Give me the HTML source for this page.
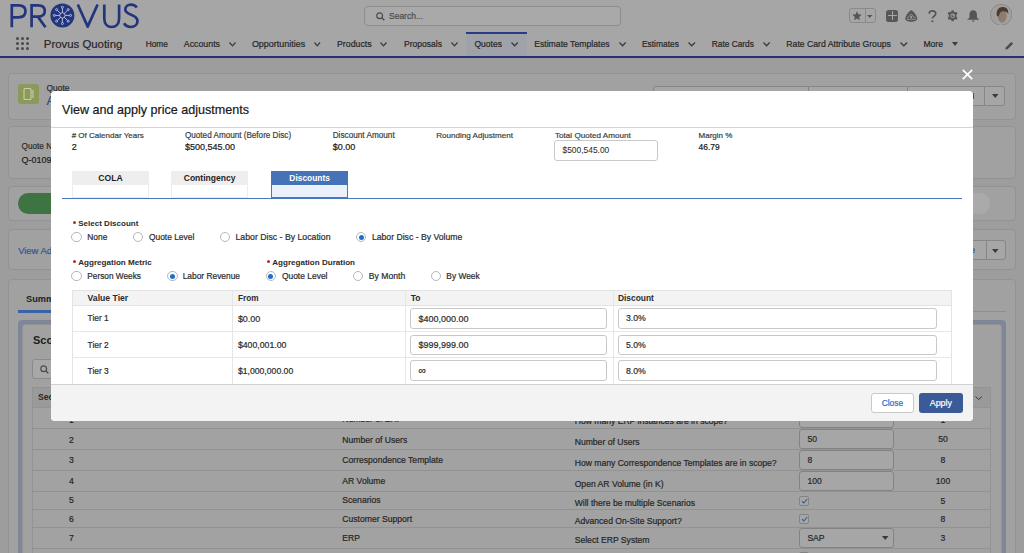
<!DOCTYPE html><html><head><meta charset="utf-8"><style>
html,body{margin:0;padding:0;} body{width:1024px;height:553px;overflow:hidden;position:relative;background:#9d9d9d;font-family:"Liberation Sans", sans-serif;}
.t{position:absolute;white-space:nowrap;-webkit-text-stroke:0.2px currentColor;} .r{position:absolute;}
</style></head><body>
<div class="r" style="left:0.00px;top:0.00px;width:1024.00px;height:56.00px;background:#a6a6a6;"></div>
<svg class="r" style="left:0;top:0" width="150" height="32" viewBox="0 0 150 32">
<g fill="none" stroke="#24357f" stroke-width="2.7" stroke-linecap="butt">
<path d="M11.8 27.3 V5.3 H18.5 C23.5 5.3 25.5 8 25.5 11.3 C25.5 14.6 23.5 17.3 18.5 17.3 H11.8"/>
<path d="M31.6 27.3 V5.3 H38 C42.8 5.3 44.8 8 44.8 11 C44.8 14 42.8 16.6 38 16.6 H31.6 M37.8 16.6 L45.5 27.3"/>
<path d="M77.8 4.5 L87.7 26.6 L97.6 4.5" stroke-linejoin="round"/>
<path d="M104.3 4.5 V18.5 C104.3 24 107.5 27 111.7 27 C115.9 27 119.1 24 119.1 18.5 V4.5"/>
<path d="M136.8 7.6 C135.5 5.6 133.5 4.7 131 4.7 C127.6 4.7 125.3 6.6 125.3 9.5 C125.3 15.8 137.5 13.6 137.5 21 C137.5 24.6 134.6 27 130.9 27 C127.9 27 125.4 25.7 124 23.3"/>
</g>
<circle cx="62.4" cy="15.4" r="12" fill="#24357f"/>
<g stroke="#c4c8dc" stroke-width="0.9" fill="none">
<circle cx="62.4" cy="15.4" r="2.7"/>
<path d="M62.4 12.7 V8.2 M62.4 18.1 V22.6 M59.7 15.4 H55.2 M65.1 15.4 H69.6 M60.5 13.5 L57.3 10.3 M64.3 13.5 L67.5 10.3 M60.5 17.3 L57.3 20.5 M64.3 17.3 L67.5 20.5"/>
<circle cx="62.4" cy="7.3" r="1"/><circle cx="62.4" cy="23.5" r="1"/><circle cx="54.3" cy="15.4" r="1"/><circle cx="70.5" cy="15.4" r="1"/>
<circle cx="56.6" cy="9.6" r="1"/><circle cx="68.2" cy="9.6" r="1"/><circle cx="56.6" cy="21.2" r="1"/><circle cx="68.2" cy="21.2" r="1"/>
</g>
</svg>
<div class="r" style="left:364.00px;top:6.00px;width:256.50px;height:19.60px;background:#a9a9a9;border:1px solid #8c8c8c;box-sizing:border-box;border-radius:4px;"></div>
<svg class="r" style="left:375.5px;top:11.5px" width="9" height="9"><circle cx="3.7" cy="3.7" r="2.9" fill="none" stroke="#4a4a4a" stroke-width="1.2"/><path d="M5.8 5.8 L8.3 8.3" stroke="#4a4a4a" stroke-width="1.3"/></svg>
<div class="t" style="left:389.00px;top:12px;font-size:8.5px;line-height:8.5px;color:#4d4d4d;">Search...</div>
<div class="r" style="left:849.30px;top:8.10px;width:26.30px;height:15.30px;background:transparent;border:1px solid #8a8a8a;box-sizing:border-box;border-radius:3px;"></div>
<div class="r" style="left:865.00px;top:8.50px;width:1.00px;height:14.50px;background:#8a8a8a;"></div>
<svg class="r" style="left:851.8px;top:10.6px" width="10" height="10" viewBox="0 0 24 24"><path d="M12 0.8 L15.2 8 L23.2 8.8 L17.2 14.1 L18.9 22 L12 17.9 L5.1 22 L6.8 14.1 L0.8 8.8 L8.8 8 Z" fill="#555555"/></svg>
<svg class="r" style="left:867.25px;top:15.100000000000001px;overflow:visible" width="5.5" height="3"><path d="M0 0 L5.5 0 L2.75 3 Z" fill="#555555"/></svg>
<div class="r" style="left:886.20px;top:9.90px;width:12.10px;height:12.00px;background:#585858;border-radius:2.5px;"></div>
<div class="r" style="left:891.70px;top:11.30px;width:1.20px;height:9.20px;background:#a6a6a6;"></div>
<div class="r" style="left:887.60px;top:15.30px;width:9.40px;height:1.20px;background:#a6a6a6;"></div>
<svg class="r" style="left:905px;top:9.8px" width="12.5" height="12.2" viewBox="0 0 25 24"><path d="M12.5 0.5 C9 0.5 0.5 12 0.5 17 C0.5 21.5 6 23.5 12.5 23.5 C19 23.5 24.5 21.5 24.5 17 C24.5 12 16 0.5 12.5 0.5 Z" fill="#575757"/><path d="M3.5 16.5 C7 14 10 11.5 12.5 8 M12.5 8 C15 11.5 18 14 21.5 16.5 M4 19 C9 18 16 18 21 19" stroke="#a6a6a6" stroke-width="1.5" fill="none"/><circle cx="12.5" cy="14" r="2.2" fill="#a6a6a6"/></svg>
<svg class="r" style="left:927.5px;top:10px" width="9" height="12.5" viewBox="0 0 9 12.5"><path d="M1.2 3.8 C1.2 1.9 2.6 0.9 4.4 0.9 C6.3 0.9 7.7 2 7.7 3.7 C7.7 5.3 6.6 5.9 5.5 6.6 C4.7 7.1 4.4 7.6 4.4 8.6" fill="none" stroke="#555555" stroke-width="1.7"/><circle cx="4.4" cy="11.2" r="1.05" fill="#555555"/></svg>
<svg class="r" style="left:946.5px;top:10.3px" width="11.2" height="11.6" viewBox="0 0 24 25"><path fill="#555555" d="M10 0.5 H14 L14.8 3.6 L17.6 5.1 L20.6 4.1 L22.6 7.5 L20.3 9.7 V15.3 L22.6 17.5 L20.6 20.9 L17.6 19.9 L14.8 21.4 L14 24.5 H10 L9.2 21.4 L6.4 19.9 L3.4 20.9 L1.4 17.5 L3.7 15.3 V9.7 L1.4 7.5 L3.4 4.1 L6.4 5.1 L9.2 3.6 Z"/><circle cx="12" cy="12.5" r="5" fill="#a6a6a6"/><path d="M12 9.5 A3 3 0 1 0 15 12.5 H12 Z" fill="#555555"/></svg>
<svg class="r" style="left:966.6px;top:10px" width="12.4" height="12" viewBox="0 0 25 24"><path fill="#555555" d="M12.5 0.5 C7.5 0.5 5 4 5 9 V14 C5 16 3 17.5 0.8 18.5 V19.5 H24.2 V18.5 C22 17.5 20 16 20 14 V9 C20 4 17.5 0.5 12.5 0.5 Z"/><path d="M9.8 21 C10.3 22.8 11.3 23.6 12.5 23.6 C13.7 23.6 14.7 22.8 15.2 21 Z" fill="#555555"/></svg>
<svg class="r" style="left:989.8px;top:3.6px" width="22.4" height="21.6" viewBox="0 0 22.4 21.6"><defs><clipPath id="av"><ellipse cx="11.2" cy="10.8" rx="10.2" ry="9.9"/></clipPath></defs>
<ellipse cx="11.2" cy="10.8" rx="10.7" ry="10.4" fill="#a3a09d" stroke="#7a7a7a" stroke-width="0.7"/><g clip-path="url(#av)"><rect x="0" y="0" width="23" height="22" fill="#a29f9b"/>
<path d="M12 6.5 C15.5 6.5 17 9 16.6 12.5 C16.2 16 14.5 18.5 12.2 18.5 C9.8 18.5 8.2 16 7.9 13 C7.6 9.5 9 6.5 12 6.5 Z" fill="#8d7b72"/>
<path d="M6.8 11.5 C6 6 9 3 12.5 3 C16.5 3 18.8 5.5 18.2 10 C17.5 8 16 7.2 13.5 7.2 C11 7.2 9.5 8.5 8.8 12.5 C8 12.8 7.3 12.3 6.8 11.5 Z" fill="#4a3b31"/>
<path d="M3 22 C5 18.5 8 17.5 10 18.3 L12 22 Z" fill="#9aa4b0"/></g></svg>
<div class="r" style="left:15.7px;top:36.5px;width:3px;height:3px;border-radius:50%;background:#4a4a4a"></div>
<div class="r" style="left:21.1px;top:36.5px;width:3px;height:3px;border-radius:50%;background:#4a4a4a"></div>
<div class="r" style="left:26.3px;top:36.5px;width:3px;height:3px;border-radius:50%;background:#4a4a4a"></div>
<div class="r" style="left:15.7px;top:41.8px;width:3px;height:3px;border-radius:50%;background:#4a4a4a"></div>
<div class="r" style="left:21.1px;top:41.8px;width:3px;height:3px;border-radius:50%;background:#4a4a4a"></div>
<div class="r" style="left:26.3px;top:41.8px;width:3px;height:3px;border-radius:50%;background:#4a4a4a"></div>
<div class="r" style="left:15.7px;top:47.1px;width:3px;height:3px;border-radius:50%;background:#4a4a4a"></div>
<div class="r" style="left:21.1px;top:47.1px;width:3px;height:3px;border-radius:50%;background:#4a4a4a"></div>
<div class="r" style="left:26.3px;top:47.1px;width:3px;height:3px;border-radius:50%;background:#4a4a4a"></div>
<div class="t" style="left:43.80px;top:39px;font-size:11.4px;line-height:11.4px;color:#262626;">Provus Quoting</div>
<div class="r" style="left:466.00px;top:32.00px;width:61.00px;height:24.00px;background:#a0a2aa;"></div>
<div class="r" style="left:466.00px;top:32.00px;width:61.00px;height:2.00px;background:#2a3c86;"></div>
<div class="t" style="left:145.70px;top:40px;font-size:8.36px;line-height:8.36px;color:#262626;">Home</div>
<div class="t" style="left:183.80px;top:40px;font-size:8.8px;line-height:8.8px;color:#262626;">Accounts</div>
<svg class="r" style="left:229px;top:42.2px;overflow:visible" width="7" height="4.299999999999997"><path d="M0.5 0.5 L3.5 3.799999999999997 L6.5 0.5" fill="none" stroke="#3a3a3a" stroke-width="1.25"/></svg>
<div class="t" style="left:251.90px;top:40px;font-size:8.96px;line-height:8.96px;color:#262626;">Opportunities</div>
<svg class="r" style="left:314px;top:42.2px;overflow:visible" width="6.5" height="4.299999999999997"><path d="M0.5 0.5 L3.25 3.799999999999997 L6.0 0.5" fill="none" stroke="#3a3a3a" stroke-width="1.25"/></svg>
<div class="t" style="left:337.00px;top:40px;font-size:8.79px;line-height:8.79px;color:#262626;">Products</div>
<svg class="r" style="left:380px;top:42.2px;overflow:visible" width="7" height="4.299999999999997"><path d="M0.5 0.5 L3.5 3.799999999999997 L6.5 0.5" fill="none" stroke="#3a3a3a" stroke-width="1.25"/></svg>
<div class="t" style="left:404.00px;top:40px;font-size:8.54px;line-height:8.54px;color:#262626;">Proposals</div>
<svg class="r" style="left:451px;top:42.2px;overflow:visible" width="7" height="4.299999999999997"><path d="M0.5 0.5 L3.5 3.799999999999997 L6.5 0.5" fill="none" stroke="#3a3a3a" stroke-width="1.25"/></svg>
<div class="t" style="left:474.50px;top:40px;font-size:8.5px;line-height:8.5px;color:#262626;">Quotes</div>
<svg class="r" style="left:510.6px;top:42.2px;overflow:visible" width="7.2999999999999545" height="4.299999999999997"><path d="M0.5 0.5 L3.6499999999999773 3.799999999999997 L6.7999999999999545 0.5" fill="none" stroke="#3a3a3a" stroke-width="1.25"/></svg>
<div class="t" style="left:534.20px;top:40px;font-size:8.67px;line-height:8.67px;color:#262626;">Estimate Templates</div>
<svg class="r" style="left:618.5px;top:42.2px;overflow:visible" width="7.2000000000000455" height="4.299999999999997"><path d="M0.5 0.5 L3.6000000000000227 3.799999999999997 L6.7000000000000455 0.5" fill="none" stroke="#3a3a3a" stroke-width="1.25"/></svg>
<div class="t" style="left:641.90px;top:40px;font-size:8.45px;line-height:8.45px;color:#262626;">Estimates</div>
<svg class="r" style="left:688px;top:42.2px;overflow:visible" width="7.5" height="4.299999999999997"><path d="M0.5 0.5 L3.75 3.799999999999997 L7.0 0.5" fill="none" stroke="#3a3a3a" stroke-width="1.25"/></svg>
<div class="t" style="left:711.80px;top:40px;font-size:8.34px;line-height:8.34px;color:#262626;">Rate Cards</div>
<svg class="r" style="left:762.8px;top:42.2px;overflow:visible" width="7.2000000000000455" height="4.299999999999997"><path d="M0.5 0.5 L3.6000000000000227 3.799999999999997 L6.7000000000000455 0.5" fill="none" stroke="#3a3a3a" stroke-width="1.25"/></svg>
<div class="t" style="left:786.30px;top:40px;font-size:8.68px;line-height:8.68px;color:#262626;">Rate Card Attribute Groups</div>
<svg class="r" style="left:899.9px;top:42.2px;overflow:visible" width="7.600000000000023" height="4.299999999999997"><path d="M0.5 0.5 L3.8000000000000114 3.799999999999997 L7.100000000000023 0.5" fill="none" stroke="#3a3a3a" stroke-width="1.25"/></svg>
<div class="t" style="left:923.50px;top:40px;font-size:8.56px;line-height:8.56px;color:#262626;">More</div>
<svg class="r" style="left:952.3px;top:42.2px;overflow:visible" width="6" height="4"><path d="M0 0 L6 0 L3.0 4 Z" fill="#3e3e3e"/></svg>
<svg class="r" style="left:1004.5px;top:40.5px" width="9" height="9" viewBox="0 0 10 10"><path d="M0.5 9.5 L0.8 7.2 L7 1 L9 3 L2.8 9.2 Z" fill="#4a4a4a"/></svg>
<div class="r" style="left:0.00px;top:56.00px;width:1024.00px;height:2.00px;background:#243272;"></div>
<div class="r" style="left:8.00px;top:73.00px;width:1007.50px;height:46.50px;background:#a1a1a1;border:1px solid #939393;box-sizing:border-box;border-radius:4px;"></div>
<div class="r" style="left:18.40px;top:83.80px;width:20.40px;height:20.40px;background:#8b9a5a;border-radius:3px;"></div>
<svg class="r" style="left:22px;top:87px" width="14" height="14" viewBox="0 0 14 14"><rect x="2" y="1.5" width="7" height="11" rx="1" fill="none" stroke="#c8ceb0" stroke-width="1.1"/><path d="M11 3 V11" stroke="#c8ceb0" stroke-width="1.1"/></svg>
<div class="t" style="left:46.60px;top:84px;font-size:8.4px;line-height:8.4px;color:#2c2c2c;">Quote</div>
<div class="t" style="left:46.60px;top:94px;font-size:13px;line-height:13px;color:#2a4d8a;">A</div>
<div class="r" style="left:652.70px;top:86.00px;width:352.50px;height:20.30px;background:#a6a6a6;border:1px solid #868686;box-sizing:border-box;border-radius:3px;"></div>
<div class="r" style="left:808.00px;top:86.00px;width:1.00px;height:20.30px;background:#868686;"></div>
<div class="r" style="left:906.50px;top:86.00px;width:1.00px;height:20.30px;background:#868686;"></div>
<div class="r" style="left:984.00px;top:86.00px;width:1.00px;height:20.30px;background:#868686;"></div>
<div class="r" style="left:972.80px;top:93.00px;width:1.40px;height:6.00px;background:#2f5597;"></div>
<svg class="r" style="left:991.75px;top:94.1px;overflow:visible" width="6.5" height="4"><path d="M0 0 L6.5 0 L3.25 4 Z" fill="#3a3a3a"/></svg>
<div class="r" style="left:8.00px;top:126.00px;width:1007.50px;height:52.50px;background:#a1a1a1;border:1px solid #939393;box-sizing:border-box;border-radius:4px;"></div>
<div class="t" style="left:21.60px;top:143px;font-size:8.2px;line-height:8.2px;color:#2c2c2c;">Quote Number</div>
<div class="t" style="left:21.60px;top:156px;font-size:9px;line-height:9px;color:#1e1e1e;">Q-01098</div>
<div class="r" style="left:8.00px;top:185.60px;width:1007.50px;height:35.90px;background:#a1a1a1;border:1px solid #939393;box-sizing:border-box;border-radius:4px;"></div>
<div class="r" style="left:17.70px;top:193.00px;width:382.30px;height:20.50px;background:#3d7442;border-radius:10.25px;"></div>
<div class="r" style="left:600.00px;top:193.00px;width:390.00px;height:20.50px;background:#aaaaaa;border-radius:10.25px;"></div>
<div class="r" style="left:8.00px;top:229.40px;width:1007.50px;height:40.60px;background:#a1a1a1;border:1px solid #939393;box-sizing:border-box;border-radius:4px;"></div>
<div class="t" style="left:18.20px;top:246px;font-size:9.4px;line-height:9.4px;color:#2f5597;">View Additional Details</div>
<div class="r" style="left:900.00px;top:240.30px;width:106.00px;height:19.70px;background:#a6a6a6;border:1px solid #868686;box-sizing:border-box;border-radius:3px;"></div>
<div class="r" style="left:985.50px;top:240.30px;width:1.00px;height:19.70px;background:#868686;"></div>
<div class="t" style="left:975.00px;top:246px;font-size:9px;line-height:9px;color:#2f5597;transform:translateX(-100%);">Generate</div>
<svg class="r" style="left:992.15px;top:249.0px;overflow:visible" width="6.5" height="4"><path d="M0 0 L6.5 0 L3.25 4 Z" fill="#3a3a3a"/></svg>
<div class="r" style="left:8.00px;top:278.70px;width:1007.50px;height:321.30px;background:#a1a1a1;border:1px solid #939393;box-sizing:border-box;border-radius:4px;"></div>
<div class="t" style="left:26.00px;top:295px;font-size:9.2px;line-height:9.2px;color:#1e1e1e;font-weight:700;-webkit-text-stroke:0;">Summary</div>
<div class="r" style="left:17.70px;top:311.00px;width:988.30px;height:1.00px;background:#8e8e8e;"></div>
<div class="r" style="left:17.70px;top:310.00px;width:62.30px;height:2.50px;background:#3a62a6;"></div>
<div class="r" style="left:18.20px;top:319.50px;width:987.50px;height:280.50px;background:#7d8799;border-radius:4px;"></div>
<div class="r" style="left:22.30px;top:324.00px;width:979.30px;height:276.00px;background:#a1a1a1;border:1px solid #939393;box-sizing:border-box;border-radius:3px;"></div>
<div class="t" style="left:33.00px;top:335px;font-size:11px;line-height:11px;color:#1e1e1e;font-weight:700;-webkit-text-stroke:0;">Scope</div>
<div class="r" style="left:32.40px;top:359.40px;width:267.60px;height:19.60px;background:#a8a8a8;border:1px solid #8a8a8a;box-sizing:border-box;border-radius:3px;"></div>
<svg class="r" style="left:40px;top:364.5px" width="9" height="9"><circle cx="3.7" cy="3.7" r="2.9" fill="none" stroke="#4a4a4a" stroke-width="1.2"/><path d="M5.8 5.8 L8.3 8.3" stroke="#4a4a4a" stroke-width="1.3"/></svg>
<div class="r" style="left:32.40px;top:386.50px;width:958.60px;height:213.50px;background:#a2a2a2;border:1px solid #939393;box-sizing:border-box;"></div>
<div class="r" style="left:32.40px;top:386.50px;width:958.60px;height:21.00px;background:#9a9a9a;border:1px solid #939393;box-sizing:border-box;"></div>
<div class="t" style="left:38.00px;top:393px;font-size:8.6px;line-height:8.6px;color:#262626;font-weight:700;-webkit-text-stroke:0;">Section</div>
<svg class="r" style="left:974.6px;top:395.5px;overflow:visible" width="7.5" height="4.0"><path d="M0.5 0.5 L3.75 3.5 L7.0 0.5" fill="none" stroke="#3a3a3a" stroke-width="1.0"/></svg>
<div class="r" style="left:32.40px;top:428.00px;width:958.60px;height:1.00px;background:#929292;"></div>
<div class="r" style="left:32.40px;top:449.00px;width:958.60px;height:1.00px;background:#929292;"></div>
<div class="r" style="left:32.40px;top:470.00px;width:958.60px;height:1.00px;background:#929292;"></div>
<div class="r" style="left:32.40px;top:491.00px;width:958.60px;height:1.00px;background:#929292;"></div>
<div class="r" style="left:32.40px;top:509.00px;width:958.60px;height:1.00px;background:#929292;"></div>
<div class="r" style="left:32.40px;top:527.00px;width:958.60px;height:1.00px;background:#929292;"></div>
<div class="r" style="left:32.40px;top:548.00px;width:958.60px;height:1.00px;background:#929292;"></div>
<div class="t" style="left:69.00px;top:416px;font-size:8.6px;line-height:8.6px;color:#262626;">1</div>
<div class="t" style="left:342.30px;top:415px;font-size:8.6px;line-height:8.6px;color:#262626;">Number of ERP</div>
<div class="t" style="left:574.70px;top:417px;font-size:8.6px;line-height:8.6px;color:#262626;">How many ERP instances are in scope?</div>
<div class="t" style="left:69.00px;top:436px;font-size:8.6px;line-height:8.6px;color:#262626;">2</div>
<div class="t" style="left:342.30px;top:436px;font-size:8.6px;line-height:8.6px;color:#262626;">Number of Users</div>
<div class="t" style="left:574.70px;top:438px;font-size:8.6px;line-height:8.6px;color:#262626;">Number of Users</div>
<div class="t" style="left:69.00px;top:456px;font-size:8.6px;line-height:8.6px;color:#262626;">3</div>
<div class="t" style="left:342.30px;top:456px;font-size:8.6px;line-height:8.6px;color:#262626;">Correspondence Template</div>
<div class="t" style="left:574.70px;top:459px;font-size:8.6px;line-height:8.6px;color:#262626;">How many Correspondence Templates are in scope?</div>
<div class="t" style="left:69.00px;top:477px;font-size:8.6px;line-height:8.6px;color:#262626;">4</div>
<div class="t" style="left:342.30px;top:477px;font-size:8.6px;line-height:8.6px;color:#262626;">AR Volume</div>
<div class="t" style="left:574.70px;top:480px;font-size:8.6px;line-height:8.6px;color:#262626;">Open AR Volume (in K)</div>
<div class="t" style="left:69.00px;top:496px;font-size:8.6px;line-height:8.6px;color:#262626;">5</div>
<div class="t" style="left:342.30px;top:496px;font-size:8.6px;line-height:8.6px;color:#262626;">Scenarios</div>
<div class="t" style="left:574.70px;top:499px;font-size:8.6px;line-height:8.6px;color:#262626;">Will there be multiple Scenarios</div>
<div class="t" style="left:69.00px;top:515px;font-size:8.6px;line-height:8.6px;color:#262626;">6</div>
<div class="t" style="left:342.30px;top:515px;font-size:8.6px;line-height:8.6px;color:#262626;">Customer Support</div>
<div class="t" style="left:574.70px;top:517px;font-size:8.6px;line-height:8.6px;color:#262626;">Advanced On-Site Support?</div>
<div class="t" style="left:69.00px;top:534px;font-size:8.6px;line-height:8.6px;color:#262626;">7</div>
<div class="t" style="left:342.30px;top:534px;font-size:8.6px;line-height:8.6px;color:#262626;">ERP</div>
<div class="t" style="left:574.70px;top:536px;font-size:8.6px;line-height:8.6px;color:#262626;">Select ERP System</div>
<div class="r" style="left:799.20px;top:405.00px;width:95.10px;height:22.70px;background:#a6a6a6;border:1px solid #838383;box-sizing:border-box;border-radius:3px;"></div>
<div class="t" style="left:943.00px;top:416px;font-size:8.6px;line-height:8.6px;color:#262626;transform:translateX(-50%);">1</div>
<div class="r" style="left:799.20px;top:429.10px;width:95.10px;height:20.20px;background:#a6a6a6;border:1px solid #838383;box-sizing:border-box;border-radius:3px;"></div>
<div class="t" style="left:807.40px;top:435px;font-size:8.6px;line-height:8.6px;color:#262626;">50</div>
<div class="t" style="left:943.00px;top:435px;font-size:8.6px;line-height:8.6px;color:#262626;transform:translateX(-50%);">50</div>
<div class="r" style="left:799.20px;top:450.20px;width:95.10px;height:20.00px;background:#a6a6a6;border:1px solid #838383;box-sizing:border-box;border-radius:3px;"></div>
<div class="t" style="left:807.40px;top:456px;font-size:8.6px;line-height:8.6px;color:#262626;">8</div>
<div class="t" style="left:943.00px;top:456px;font-size:8.6px;line-height:8.6px;color:#262626;transform:translateX(-50%);">8</div>
<div class="r" style="left:799.20px;top:471.20px;width:95.10px;height:20.00px;background:#a6a6a6;border:1px solid #838383;box-sizing:border-box;border-radius:3px;"></div>
<div class="t" style="left:807.40px;top:477px;font-size:8.6px;line-height:8.6px;color:#262626;">100</div>
<div class="t" style="left:943.00px;top:477px;font-size:8.6px;line-height:8.6px;color:#262626;transform:translateX(-50%);">100</div>
<div class="r" style="left:799.20px;top:496.00px;width:10.20px;height:10.40px;background:#a6a6a6;border:1px solid #838383;box-sizing:border-box;border-radius:2px;"></div>
<svg class="r" style="left:801px;top:498px" width="7" height="6"><path d="M1 3.2 L2.8 5 L6.2 1" fill="none" stroke="#2d58a0" stroke-width="1.1"/></svg>
<div class="t" style="left:943.00px;top:497px;font-size:8.6px;line-height:8.6px;color:#262626;transform:translateX(-50%);">5</div>
<div class="r" style="left:799.20px;top:513.80px;width:10.20px;height:10.40px;background:#a6a6a6;border:1px solid #838383;box-sizing:border-box;border-radius:2px;"></div>
<svg class="r" style="left:801px;top:515.8px" width="7" height="6"><path d="M1 3.2 L2.8 5 L6.2 1" fill="none" stroke="#2d58a0" stroke-width="1.1"/></svg>
<div class="t" style="left:943.00px;top:515px;font-size:8.6px;line-height:8.6px;color:#262626;transform:translateX(-50%);">8</div>
<div class="r" style="left:799.20px;top:527.50px;width:95.10px;height:20.30px;background:#a6a6a6;border:1px solid #838383;box-sizing:border-box;border-radius:3px;"></div>
<div class="t" style="left:807.40px;top:534px;font-size:8.6px;line-height:8.6px;color:#262626;">SAP</div>
<svg class="r" style="left:882.35px;top:536.0px;overflow:visible" width="6.5" height="4"><path d="M0 0 L6.5 0 L3.25 4 Z" fill="#3a3a3a"/></svg>
<div class="t" style="left:943.00px;top:534px;font-size:8.6px;line-height:8.6px;color:#262626;transform:translateX(-50%);">3</div>
<div class="r" style="left:799.20px;top:551.80px;width:10.20px;height:8.20px;background:#a6a6a6;border:1px solid #838383;box-sizing:border-box;border-radius:2px;"></div>
<div class="r" style="left:51px;top:91px;width:922px;height:330px;background:#fff;border-radius:4px;overflow:hidden">
</div>
<svg class="r" style="left:961.7px;top:68.9px" width="11" height="11"><path d="M0.8 0.8 L10.2 10.2 M10.2 0.8 L0.8 10.2" stroke="#ffffff" stroke-width="1.7"/></svg>
<div class="t" style="left:62.00px;top:104px;font-size:12.57px;line-height:12.57px;color:#181818;">View and apply price adjustments</div>
<div class="r" style="left:51.00px;top:126.60px;width:922.00px;height:1.00px;background:#d4d4d4;"></div>
<div class="t" style="left:71.70px;top:132px;font-size:8.03px;line-height:8.03px;color:#3e3e3e;"># Of Calendar Years</div>
<div class="t" style="left:71.70px;top:143px;font-size:9px;line-height:9px;color:#181818;">2</div>
<div class="t" style="left:185.00px;top:132px;font-size:8.14px;line-height:8.14px;color:#3e3e3e;">Quoted Amount (Before Disc)</div>
<div class="t" style="left:185.00px;top:143px;font-size:8.99px;line-height:8.99px;color:#181818;">$500,545.00</div>
<div class="t" style="left:332.70px;top:132px;font-size:8.21px;line-height:8.21px;color:#3e3e3e;">Discount Amount</div>
<div class="t" style="left:332.70px;top:143px;font-size:8.99px;line-height:8.99px;color:#181818;">$0.00</div>
<div class="t" style="left:436.20px;top:132px;font-size:8.08px;line-height:8.08px;color:#3e3e3e;">Rounding Adjustment</div>
<div class="t" style="left:555.00px;top:132px;font-size:8.12px;line-height:8.12px;color:#3e3e3e;">Total Quoted Amount</div>
<div class="r" style="left:554.30px;top:140.20px;width:103.30px;height:20.50px;background:#fff;border:1px solid #c9c9c9;box-sizing:border-box;border-radius:3px;"></div>
<div class="t" style="left:562.50px;top:146px;font-size:8.41px;line-height:8.41px;color:#2e2e2e;-webkit-text-stroke:0.05px currentColor;">$500,545.00</div>
<div class="t" style="left:698.60px;top:132px;font-size:8.0px;line-height:8.0px;color:#3e3e3e;">Margin %</div>
<div class="t" style="left:698.60px;top:143px;font-size:8.43px;line-height:8.43px;color:#181818;">46.79</div>
<div class="r" style="left:72.10px;top:171.00px;width:76.80px;height:27.20px;background:#ffffff;border:1px solid #ececec;box-sizing:border-box;"></div>
<div class="r" style="left:72.10px;top:171.00px;width:76.80px;height:13.60px;background:#eeeeee;"></div>
<div class="t" style="left:110.50px;top:174px;font-size:8.65px;line-height:8.65px;color:#1e1e1e;font-weight:700;-webkit-text-stroke:0;transform:translateX(-50%);">COLA</div>
<div class="r" style="left:171.30px;top:171.00px;width:76.60px;height:27.20px;background:#ffffff;border:1px solid #ececec;box-sizing:border-box;"></div>
<div class="r" style="left:171.30px;top:171.00px;width:76.60px;height:13.60px;background:#eeeeee;"></div>
<div class="t" style="left:209.60px;top:174px;font-size:8.55px;line-height:8.55px;color:#1e1e1e;font-weight:700;-webkit-text-stroke:0;transform:translateX(-50%);">Contingency</div>
<div class="r" style="left:271.30px;top:171.00px;width:76.60px;height:27.20px;background:#eaf1fb;border:1px solid #4a78bf;box-sizing:border-box;"></div>
<div class="r" style="left:271.30px;top:171.00px;width:76.60px;height:13.60px;background:#4672b8;"></div>
<div class="t" style="left:309.60px;top:174px;font-size:8.38px;line-height:8.38px;color:#ffffff;font-weight:700;-webkit-text-stroke:0;transform:translateX(-50%);">Discounts</div>
<div class="r" style="left:61.60px;top:198.00px;width:900.60px;height:1.20px;background:#4a78bf;"></div>
<div class="r" style="left:73.15px;top:220.54999999999998px;width:3.1px;height:3.1px;border-radius:50%;background:#c0272d"></div>
<div class="t" style="left:78.20px;top:220px;font-size:8.04px;line-height:8.04px;color:#2b2b2b;font-weight:700;-webkit-text-stroke:0;">Select Discount</div>
<div class="r" style="left:71.3px;top:231.79999999999998px;width:10.6px;height:10.6px;box-sizing:border-box;border:1px solid #b8b8b8;border-radius:50%;background:#fff"></div>
<div class="t" style="left:87.30px;top:233px;font-size:8.37px;line-height:8.37px;color:#2b2b2b;">None</div>
<div class="r" style="left:132.9px;top:231.79999999999998px;width:10.6px;height:10.6px;box-sizing:border-box;border:1px solid #b8b8b8;border-radius:50%;background:#fff"></div>
<div class="t" style="left:148.90px;top:233px;font-size:8.44px;line-height:8.44px;color:#2b2b2b;">Quote Level</div>
<div class="r" style="left:219.8px;top:231.79999999999998px;width:10.6px;height:10.6px;box-sizing:border-box;border:1px solid #b8b8b8;border-radius:50%;background:#fff"></div>
<div class="t" style="left:235.50px;top:233px;font-size:8.73px;line-height:8.73px;color:#2b2b2b;">Labor Disc - By Location</div>
<div class="r" style="left:355.8px;top:231.79999999999998px;width:10.6px;height:10.6px;box-sizing:border-box;border:1px solid #b8b8b8;border-radius:50%;background:#fff"></div>
<div class="r" style="left:358.5px;top:234.5px;width:5.2px;height:5.2px;border-radius:50%;background:#1b6fd2"></div>
<div class="t" style="left:371.90px;top:233px;font-size:8.67px;line-height:8.67px;color:#2b2b2b;">Labor Disc - By Volume</div>
<div class="r" style="left:73.15px;top:259.54999999999995px;width:3.1px;height:3.1px;border-radius:50%;background:#c0272d"></div>
<div class="t" style="left:78.20px;top:259px;font-size:8.08px;line-height:8.08px;color:#2b2b2b;font-weight:700;-webkit-text-stroke:0;">Aggregation Metric</div>
<div class="r" style="left:267.24999999999994px;top:259.54999999999995px;width:3.1px;height:3.1px;border-radius:50%;background:#c0272d"></div>
<div class="t" style="left:272.30px;top:259px;font-size:8.06px;line-height:8.06px;color:#2b2b2b;font-weight:700;-webkit-text-stroke:0;">Aggregation Duration</div>
<div class="r" style="left:71.3px;top:270.8px;width:10.6px;height:10.6px;box-sizing:border-box;border:1px solid #b8b8b8;border-radius:50%;background:#fff"></div>
<div class="t" style="left:87.30px;top:273px;font-size:8.28px;line-height:8.28px;color:#2b2b2b;">Person Weeks</div>
<div class="r" style="left:167px;top:270.8px;width:10.6px;height:10.6px;box-sizing:border-box;border:1px solid #b8b8b8;border-radius:50%;background:#fff"></div>
<div class="r" style="left:169.70000000000002px;top:273.5px;width:5.2px;height:5.2px;border-radius:50%;background:#1b6fd2"></div>
<div class="t" style="left:182.70px;top:272px;font-size:8.39px;line-height:8.39px;color:#2b2b2b;">Labor Revenue</div>
<div class="r" style="left:265.6px;top:270.8px;width:10.6px;height:10.6px;box-sizing:border-box;border:1px solid #b8b8b8;border-radius:50%;background:#fff"></div>
<div class="r" style="left:268.3px;top:273.5px;width:5.2px;height:5.2px;border-radius:50%;background:#1b6fd2"></div>
<div class="t" style="left:281.90px;top:272px;font-size:8.46px;line-height:8.46px;color:#2b2b2b;">Quote Level</div>
<div class="r" style="left:352.5px;top:270.8px;width:10.6px;height:10.6px;box-sizing:border-box;border:1px solid #b8b8b8;border-radius:50%;background:#fff"></div>
<div class="t" style="left:368.80px;top:272px;font-size:8.64px;line-height:8.64px;color:#2b2b2b;">By Month</div>
<div class="r" style="left:430.6px;top:270.8px;width:10.6px;height:10.6px;box-sizing:border-box;border:1px solid #b8b8b8;border-radius:50%;background:#fff"></div>
<div class="t" style="left:446.30px;top:272px;font-size:8.38px;line-height:8.38px;color:#2b2b2b;">By Week</div>
<div class="r" style="left:71.80px;top:290.10px;width:880.20px;height:99.90px;background:#ffffff;border:1px solid #e3e3e3;box-sizing:border-box;"></div>
<div class="r" style="left:71.80px;top:290.10px;width:880.20px;height:15.70px;background:#f3f3f3;border:1px solid #e3e3e3;box-sizing:border-box;"></div>
<div class="r" style="left:232.30px;top:290.10px;width:1.00px;height:99.90px;background:#e6e6e6;"></div>
<div class="r" style="left:405.30px;top:290.10px;width:1.00px;height:99.90px;background:#e6e6e6;"></div>
<div class="r" style="left:612.50px;top:290.10px;width:1.00px;height:99.90px;background:#e6e6e6;"></div>
<div class="r" style="left:71.80px;top:331.10px;width:880.20px;height:1.00px;background:#e6e6e6;"></div>
<div class="r" style="left:71.80px;top:357.40px;width:880.20px;height:1.00px;background:#e6e6e6;"></div>
<div class="t" style="left:87.60px;top:294px;font-size:8.63px;line-height:8.63px;color:#2b2b2b;font-weight:700;-webkit-text-stroke:0;">Value Tier</div>
<div class="t" style="left:237.90px;top:295px;font-size:8.24px;line-height:8.24px;color:#2b2b2b;font-weight:700;-webkit-text-stroke:0;">From</div>
<div class="t" style="left:410.70px;top:294px;font-size:8.53px;line-height:8.53px;color:#2b2b2b;font-weight:700;-webkit-text-stroke:0;">To</div>
<div class="t" style="left:617.90px;top:294px;font-size:8.44px;line-height:8.44px;color:#2b2b2b;font-weight:700;-webkit-text-stroke:0;">Discount</div>
<div class="t" style="left:87.60px;top:314px;font-size:8.37px;line-height:8.37px;color:#2b2b2b;">Tier 1</div>
<div class="t" style="left:237.90px;top:315px;font-size:8.95px;line-height:8.95px;color:#2b2b2b;">$0.00</div>
<div class="r" style="left:410.20px;top:308.40px;width:196.80px;height:20.30px;background:#fff;border:1px solid #c9c9c9;box-sizing:border-box;border-radius:3px;"></div>
<div class="r" style="left:617.60px;top:308.40px;width:319.10px;height:20.30px;background:#fff;border:1px solid #c9c9c9;box-sizing:border-box;border-radius:3px;"></div>
<div class="t" style="left:418.50px;top:315px;font-size:9.01px;line-height:9.01px;color:#2b2b2b;">$400,000.00</div>
<div class="t" style="left:626.00px;top:314px;font-size:8.69px;line-height:8.69px;color:#2b2b2b;">3.0%</div>
<div class="t" style="left:87.60px;top:341px;font-size:8.37px;line-height:8.37px;color:#2b2b2b;">Tier 2</div>
<div class="t" style="left:237.90px;top:341px;font-size:8.72px;line-height:8.72px;color:#2b2b2b;">$400,001.00</div>
<div class="r" style="left:410.20px;top:334.50px;width:196.80px;height:20.30px;background:#fff;border:1px solid #c9c9c9;box-sizing:border-box;border-radius:3px;"></div>
<div class="r" style="left:617.60px;top:334.50px;width:319.10px;height:20.30px;background:#fff;border:1px solid #c9c9c9;box-sizing:border-box;border-radius:3px;"></div>
<div class="t" style="left:418.50px;top:341px;font-size:9.01px;line-height:9.01px;color:#2b2b2b;">$999,999.00</div>
<div class="t" style="left:626.00px;top:341px;font-size:8.69px;line-height:8.69px;color:#2b2b2b;">5.0%</div>
<div class="t" style="left:87.60px;top:367px;font-size:8.37px;line-height:8.37px;color:#2b2b2b;">Tier 3</div>
<div class="t" style="left:237.90px;top:367px;font-size:8.66px;line-height:8.66px;color:#2b2b2b;">$1,000,000.00</div>
<div class="r" style="left:410.20px;top:360.40px;width:196.80px;height:20.60px;background:#fff;border:1px solid #c9c9c9;box-sizing:border-box;border-radius:3px;"></div>
<div class="r" style="left:617.60px;top:360.40px;width:319.10px;height:20.60px;background:#fff;border:1px solid #c9c9c9;box-sizing:border-box;border-radius:3px;"></div>
<div class="t" style="left:418.50px;top:365px;font-size:10.5px;line-height:10.5px;color:#2b2b2b;">∞</div>
<div class="t" style="left:626.00px;top:367px;font-size:8.69px;line-height:8.69px;color:#2b2b2b;">8.0%</div>
<div class="r" style="left:51px;top:384px;width:922px;height:37px;background:#f3f3f3;border-top:1px solid #d2d2d2;box-sizing:border-box;border-radius:0 0 4px 4px"></div>
<div class="r" style="left:871.40px;top:392.90px;width:43.00px;height:19.70px;background:#ffffff;border:1px solid #c9c9c9;box-sizing:border-box;border-radius:3px;"></div>
<div class="t" style="left:892.40px;top:399px;font-size:8.37px;line-height:8.37px;color:#1b6fd2;transform:translateX(-50%);">Close</div>
<div class="r" style="left:919.00px;top:392.90px;width:43.50px;height:19.70px;background:#3b5a98;border-radius:3px;"></div>
<div class="t" style="left:940.80px;top:399px;font-size:8.83px;line-height:8.83px;color:#ffffff;transform:translateX(-50%);">Apply</div>
</body></html>
